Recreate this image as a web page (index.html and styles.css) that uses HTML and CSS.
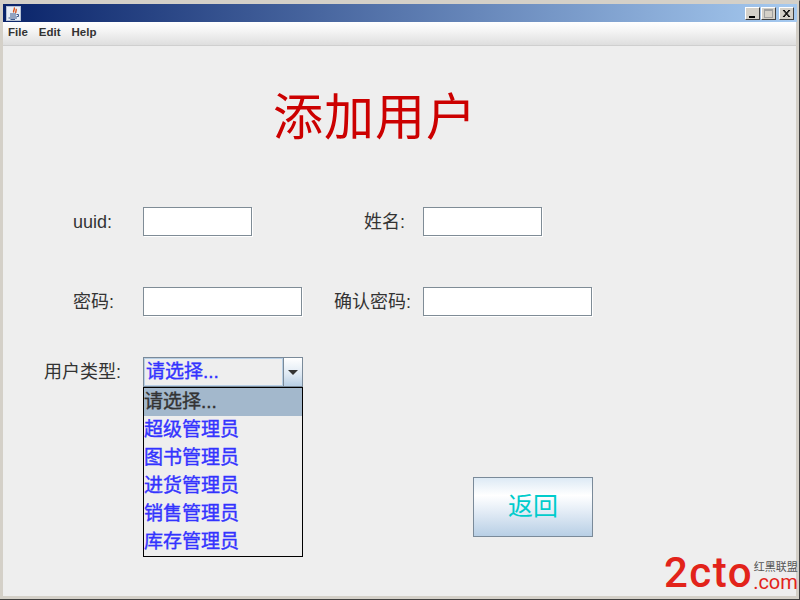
FILE: index.html
```html
<!DOCTYPE html>
<html lang="zh-CN">
<head>
  <meta charset="UTF-8">
  <title>添加用户</title>
  <link rel="stylesheet" href="styles.css">
</head>
<body>
  <div class="window">
    <div class="titlebar">
      <svg class="java-icon" width="15" height="15" viewBox="0 0 15 15">
        <rect x="0.5" y="0.5" width="14" height="14" fill="#e8eef6" stroke="#b4c0d4"/>
        <path d="M8 1.5 C10 3.5 6 4.5 8 6.5 M10 3 C11 4.5 9 5.5 10 7" fill="none" stroke="#d8541c" stroke-width="1.4"/>
        <path d="M4 8 H10 M4 10 H10 M2.5 12 H11 M4.5 13.5 H9" fill="none" stroke="#3c5a8c" stroke-width="1"/>
        <path d="M10.5 8.5 H12.5 V10.5 H10.5" fill="none" stroke="#3c5a8c" stroke-width="1"/>
      </svg>
      <div class="win-buttons">
        <div class="win-btn"><svg width="15" height="13" viewBox="0 0 15 13"><rect x="4" y="9" width="6" height="2" fill="#000"/></svg></div>
        <div class="win-btn"><svg width="15" height="13" viewBox="0 0 15 13"><rect x="3.5" y="2.5" width="8" height="8" fill="none" stroke="#a0a0a0"/><rect x="3" y="2" width="9" height="2" fill="#a0a0a0"/></svg></div>
        <div class="win-btn close-btn"><svg width="15" height="13" viewBox="0 0 15 13"><path d="M4 3 L10 10 M5 3 L11 10 M10 3 L4 10 M11 3 L5 10" stroke="#000" stroke-width="1"/></svg></div>
      </div>
    </div>

    <div class="menubar">
      <span class="menu-item">File</span>
      <span class="menu-item">Edit</span>
      <span class="menu-item">Help</span>
    </div>

    <div class="content">
      <h1 class="page-title">添加用户</h1>

      <div class="form-row first-row">
        <label class="label-first">uuid:</label>
        <input class="field short-left" type="text">
        <label class="label-second name-label">姓名:</label>
        <input class="field short-right" type="text">
      </div>

      <div class="form-row second-row">
        <label class="label-first">密码:</label>
        <input class="field long-left" type="text">
        <label class="label-second">确认密码:</label>
        <input class="field long-right" type="text">
      </div>

      <div class="form-row third-row">
        <label class="label-first type-label">用户类型:</label>
        <div class="combo">
          <div class="combo-box">
            <span class="combo-value">请选择...</span>
            <span class="combo-arrow"><i></i></span>
          </div>
          <ul class="combo-list">
            <li class="selected">请选择...</li>
            <li>超级管理员</li>
            <li>图书管理员</li>
            <li>进货管理员</li>
            <li>销售管理员</li>
            <li>库存管理员</li>
          </ul>
        </div>
      </div>

      <div class="actions">
        <button class="back-btn">返回</button>
      </div>

      <div class="watermark">
        <span class="wm-main">2cto</span>
        <div class="wm-side">
          <span class="wm-cn">红黑联盟</span>
          <span class="wm-com">.com</span>
        </div>
      </div>
    </div>
  </div>
</body>
</html>
```

FILE: styles.css
```css
* { box-sizing: border-box; }
html, body { margin: 0; padding: 0; }
body { width: 800px; height: 600px; overflow: hidden; background: #d4d0c8; font-family: "Liberation Sans", "Noto Sans CJK SC", sans-serif; color: #333; }

.window { width: 800px; height: 600px; padding: 3px 3px 3px 3px; border-right: 1px solid #404040; border-bottom: 1px solid #404040; border-top: 1px solid #d4d0c8; display: flex; flex-direction: column; }

.titlebar { height: 18px; flex: none; margin-right: -1px; padding: 0 3px; background: linear-gradient(to right, #0a246a, #a6caf0); display: flex; align-items: center; justify-content: space-between; }
.java-icon { display: block; }
.win-buttons { display: flex; gap: 1px; }
.win-btn { width: 15px; height: 13px; background: #d4d0c8; border: 1px solid; border-color: #fff #404040 #404040 #fff; overflow: hidden; }
.win-btn svg { display: block; margin: -1px; }
.close-btn { margin-left: 2px; }

.menubar { height: 24px; flex: none; padding-top: 4px; background: linear-gradient(to bottom, #fff, #f4f4f4 40%, #dedede); border-bottom: 1px solid #cfcfcf; font-size: 11.5px; font-weight: bold; display: flex; }
.menu-item { padding: 0 6px 0 5px; }

.content { flex: 1; position: relative; background: #eeeeee; }
.page-title { margin: 0; height: 161px; padding: 37px 0 0 270px; font-family: "Noto Sans CJK SC", serif; font-weight: normal; font-size: 50px; line-height: 60px; letter-spacing: 1px; color: #cc0000; }

.form-row { display: flex; align-items: center; }
.first-row { height: 29px; }
.second-row { height: 29px; margin-top: 51px; }
.third-row { height: 30px; margin-top: 41px; align-items: flex-start; }

.form-row label { font-size: 18px; line-height: 26px; font-weight: normal; }
.label-first { width: 140px; padding-left: 70px; }
.type-label { padding-left: 41px; padding-top: 2px; }
.label-second { margin-left: 32px; width: 89px; }
.name-label { margin-left: 112px; width: 59px; }

.field { height: 29px; background: #fff; border: 1px solid #7f8c96; box-shadow: 1px 1px 0 #fff; padding: 0; outline: none; }
.short-left { width: 109px; }
.short-right { width: 119px; }
.long-left { width: 159px; }
.long-right { width: 169px; }

.combo { position: relative; width: 160px; }
.combo-box { height: 30px; display: flex; border: 1px solid #7a8a99; background: #eeeeee; }
.combo-value { flex: 1; font-size: 19px; color: #3333ff; line-height: 25px; padding-left: 1px; border: 1px solid #b8cfe5; -webkit-text-stroke: 0.4px; }
.combo-arrow { width: 19px; flex: none; border-left: 1px solid #7a8a99; background: linear-gradient(to bottom, #fff, #dde8f3 60%, #b8cfe5); display: flex; align-items: center; justify-content: center; }
.combo-arrow i { display: block; width: 0; height: 0; border-left: 5px solid transparent; border-right: 5px solid transparent; border-top: 5px solid #333; }

.combo-list { position: absolute; top: 30px; left: 0; width: 160px; height: 170px; margin: 0; padding: 0; list-style: none; background: #eeeeee; border: 1px solid #000; }
.combo-list li { height: 28px; font-size: 19px; line-height: 28px; color: #3333ff; -webkit-text-stroke: 0.4px; }
.combo-list .selected { color: #333; background: #a3b8cc; }

.actions { margin-top: 90px; padding-left: 470px; }
.back-btn { display: block; width: 120px; height: 60px; padding: 0 0 6px; border: 1px solid #7a8a99; background: linear-gradient(to bottom, #ddeaf5, #fff 30%, #e6eef7 55%, #b8cfe5); font-family: "Noto Sans CJK SC", sans-serif; font-size: 25px; color: #00cccc; }

.watermark { position: absolute; right: -1px; bottom: 2px; width: 133px; height: 42px; display: flex; color: #e2231a; }
.wm-main { font-family: Roboto, sans-serif; font-weight: 500; font-size: 42px; line-height: 42px; letter-spacing: 1.5px; }
.wm-side { display: flex; flex-direction: column; align-items: flex-end; flex: 1; padding-top: 8px; }
.wm-cn { font-size: 11px; line-height: 12px; color: #555; font-family: "Noto Sans CJK SC", sans-serif; }
.wm-com { font-family: Roboto, sans-serif; font-size: 20px; line-height: 20px; }
```
